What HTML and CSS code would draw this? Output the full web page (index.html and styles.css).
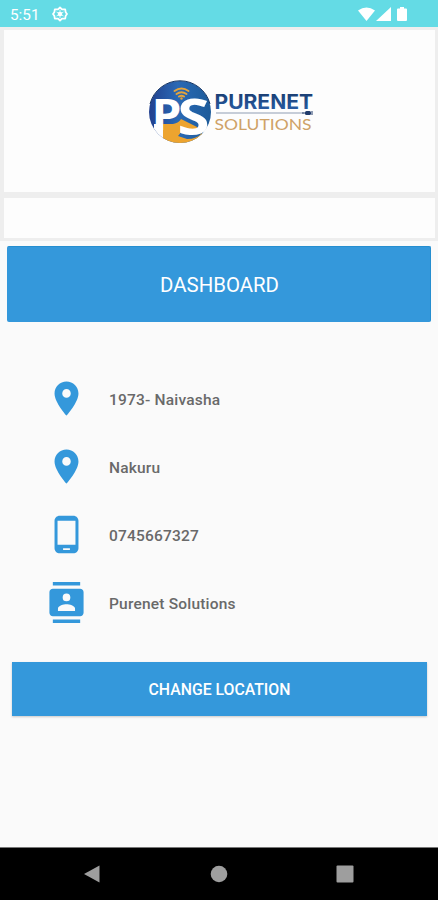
FILE: index.html
```html
<!DOCTYPE html>
<html lang="en">
<head>
<meta charset="utf-8">
<title>Dashboard</title>
<link rel="stylesheet" href="styles.css">
</head>
<body>
<header class="status">
  <span class="time">5:51</span>
  <svg class="gear" viewBox="0 0 16 16"><path d="M8 1.500 10 3.400h3.200L13.700 6.300 15 8l-1.300 1.700-.5 2.900H10L8 14.500 6 12.600H2.800l-.5-2.900L1 8l1.300-1.700.5-2.900H6z" fill="none" stroke="#fff" stroke-width="1.800" stroke-linejoin="round"/><circle cx="8" cy="8" r="2.300" fill="#fff"/><path d="M8 4v8M4.500 6l7 4M11.500 6l-7 4" stroke="#fff" stroke-width=".8"/></svg>
  <svg class="signals" viewBox="0 0 50 16"><path d="M0 3.500Q8.500-2.500 17 3.500L8.500 14zM33 0v14H18zM40 1.500h2V0h4v1.500h2q1 0 1 1V13q0 1-1 1h-8q-1 0-1-1V2.500q0-1 1-1z" fill="#fff"/></svg>
</header>
<main>
  <section class="card brand">
    <svg class="logo" viewBox="0 0 168 80">
      <defs>
        <linearGradient id="blue"><stop offset="0" stop-color="#223f8d"/><stop offset=".45" stop-color="#2a69b5"/><stop offset="1" stop-color="#1c5a97"/></linearGradient>
        <linearGradient id="word" x1="0" y1="0" x2="0" y2="1"><stop offset="0" stop-color="#173768"/><stop offset="1" stop-color="#2b62ad"/></linearGradient>
        <clipPath id="disc"><circle cx="32" cy="33" r="31"/></clipPath>
      </defs>
      <g clip-path="url(#disc)">
        <path d="M0 0h66v66H0z" fill="url(#blue)"/>
        <path d="M6 45h9v21H6z" fill="#fdfdfd"/>
        <path d="M15 45h10q6-1 8-5l16 8q1 5-5 6l-10-2-4 5 9 3q10 0 15-6v12H15z" fill="#eda42f"/>
      </g>
      <path d="M2 25A31 31 0 0 1 62 25" fill="none" stroke="#153463" stroke-width="1"/>
      <g fill="none" stroke="#e5a43c" stroke-width="2" stroke-linecap="round"><path d="M26.500 12q7-5 14 0M28.500 15q5-3.500 10 0M31 17.500q2.500-1.500 5 0"/></g>
      <circle cx="33.500" cy="19.500" r="1.200" fill="#e5a43c"/>
      <text class="mono" x="3.500" y="51" font-size="43" textLength="30" lengthAdjust="spacingAndGlyphs">P</text>
      <text class="mono" x="29.500" y="56" font-size="50" textLength="32" lengthAdjust="spacingAndGlyphs">S</text>
      <text class="name" x="66.500" y="29.500" font-size="19.500" textLength="98.500" lengthAdjust="spacingAndGlyphs">PURENET</text>
      <path d="M68 34h88" stroke="#8f9db3" stroke-width="1.200"/>
      <path d="M154 34h4M163 33h2M163 35h2" stroke="#203b6b" stroke-width="1"/>
      <rect x="157" y="32" width="6" height="4" rx="1.500" fill="#203b6b"/>
      <text class="sub" x="66.500" y="50.500" font-size="16" textLength="97" lengthAdjust="spacingAndGlyphs">SOLUTIONS</text>
    </svg>
  </section>
  <section class="card blank"></section>
  <div class="title">DASHBOARD</div>
  <ul class="info">
    <li><svg viewBox="0 0 24 24"><path d="M12 2C8.130 2 5 5.130 5 9c0 5.250 7 13 7 13s7-7.750 7-13c0-3.870-3.130-7-7-7zm0 9.500a2.500 2.500 0 1 1 0-5 2.500 2.500 0 0 1 0 5z"/></svg><span>1973- Naivasha</span></li>
    <li><svg viewBox="0 0 24 24"><path d="M12 2C8.130 2 5 5.130 5 9c0 5.250 7 13 7 13s7-7.750 7-13c0-3.870-3.130-7-7-7zm0 9.500a2.500 2.500 0 1 1 0-5 2.500 2.500 0 0 1 0 5z"/></svg><span>Nakuru</span></li>
    <li><svg viewBox="0 0 24 24"><path d="M16 1H8C6.340 1 5 2.340 5 4v16c0 1.660 1.340 3 3 3h8c1.660 0 3-1.340 3-3V4c0-1.660-1.340-3-3-3zm-2 20h-4v-1h4v1zm3.250-3H6.750V4h10.500v14z"/></svg><span>0745667327</span></li>
    <li><svg viewBox="0 0 24 24"><path d="M20 0H4v2h16V0zM4 24h16v-2H4v2zM20 4H4c-1.100 0-2 .9-2 2v12c0 1.100.9 2 2 2h16c1.100 0 2-.9 2-2V6c0-1.100-.9-2-2-2zm-8 2.750a2.250 2.250 0 1 1 0 4.500 2.250 2.250 0 0 1 0-4.500zM17 17H7v-1.500c0-1.670 3.330-2.500 5-2.500s5 .83 5 2.500V17z"/></svg><span>Purenet Solutions</span></li>
  </ul>
  <button class="change">CHANGE LOCATION</button>
</main>
<nav class="nav">
  <svg viewBox="0 0 18 18"><path d="M1 9 16.500.5v17z"/></svg>
  <svg viewBox="0 0 18 18"><circle cx="9" cy="9" r="8.300"/></svg>
  <svg viewBox="0 0 18 18"><rect x=".5" y=".5" width="17" height="17" rx="1"/></svg>
</nav>
</body>
</html>
```
FILE: styles.css
```css
* { box-sizing: border-box; }
body {
  margin: 0;
  height: 900px;
  display: flex;
  flex-direction: column;
  overflow: hidden;
  background: #fafafa;
  font-family: Roboto, sans-serif;
}
.status {
  height: 27px;
  padding: 2px 30px 0 10px;
  display: flex;
  align-items: center;
  background: #64dbe5;
  color: #fff;
}
.time { width: 42px; font-size: 15.3px; line-height: 20px; }
.gear { width: 16px; height: 16px; margin-top: -2px; }
.signals { width: 50px; height: 16px; margin-left: auto; }
main { flex: 1; display: flex; flex-direction: column; }
.card {
  background: #fdfdfd;
  border: solid #eee;
  border-width: 3px 3px 3px 4px;
}
.brand { height: 168px; display: flex; padding: 49px 0 0 144px; }
.logo { width: 168px; height: 80px; }
.mono { font-family: "Open Sans", sans-serif; font-weight: 700; fill: #fff; }
.name { font-family: Inter, sans-serif; font-weight: 700; fill: url(#word); }
.sub { font-family: Lato, sans-serif; fill: #cfa267; }
.blank { height: 46px; }
.title {
  margin: 5px 7px 0;
  padding-left: 2px;
  height: 76px;
  border-radius: 2px;
  border-top: 1px solid #258ed0;
  border-right: 1px solid #258ed0;
  background: #3498db;
  color: #fff;
  display: flex;
  align-items: center;
  justify-content: center;
  font-size: 20.4px;
}
.info {
  list-style: none;
  margin: 56px 0 0;
  padding: 0 46px;
  display: grid;
  gap: 27px;
}
.info li { display: flex; align-items: center; gap: 22px; height: 41px; }
.info svg { width: 41px; height: 41px; fill: #3498db; }
.info span { padding-top: 3px; font-size: 15.5px; font-weight: 500; letter-spacing: .2px; color: #696969; }
.change {
  margin: 39px 11px 0 12px;
  height: 54px;
  border: 0;
  padding: 1px 0 0;
  background: #3498db;
  color: #fff;
  font: 500 15.8px Roboto, sans-serif;
  box-shadow: 0 1px 2px #0003;
}
.nav {
  height: 53px;
  border-top: 1px solid #777;
  background: #000;
  display: flex;
  justify-content: space-between;
  align-items: center;
  padding: 0 84px 0 83px;
}
.nav svg { width: 18px; height: 18px; fill: #9e9e9e; }
```
